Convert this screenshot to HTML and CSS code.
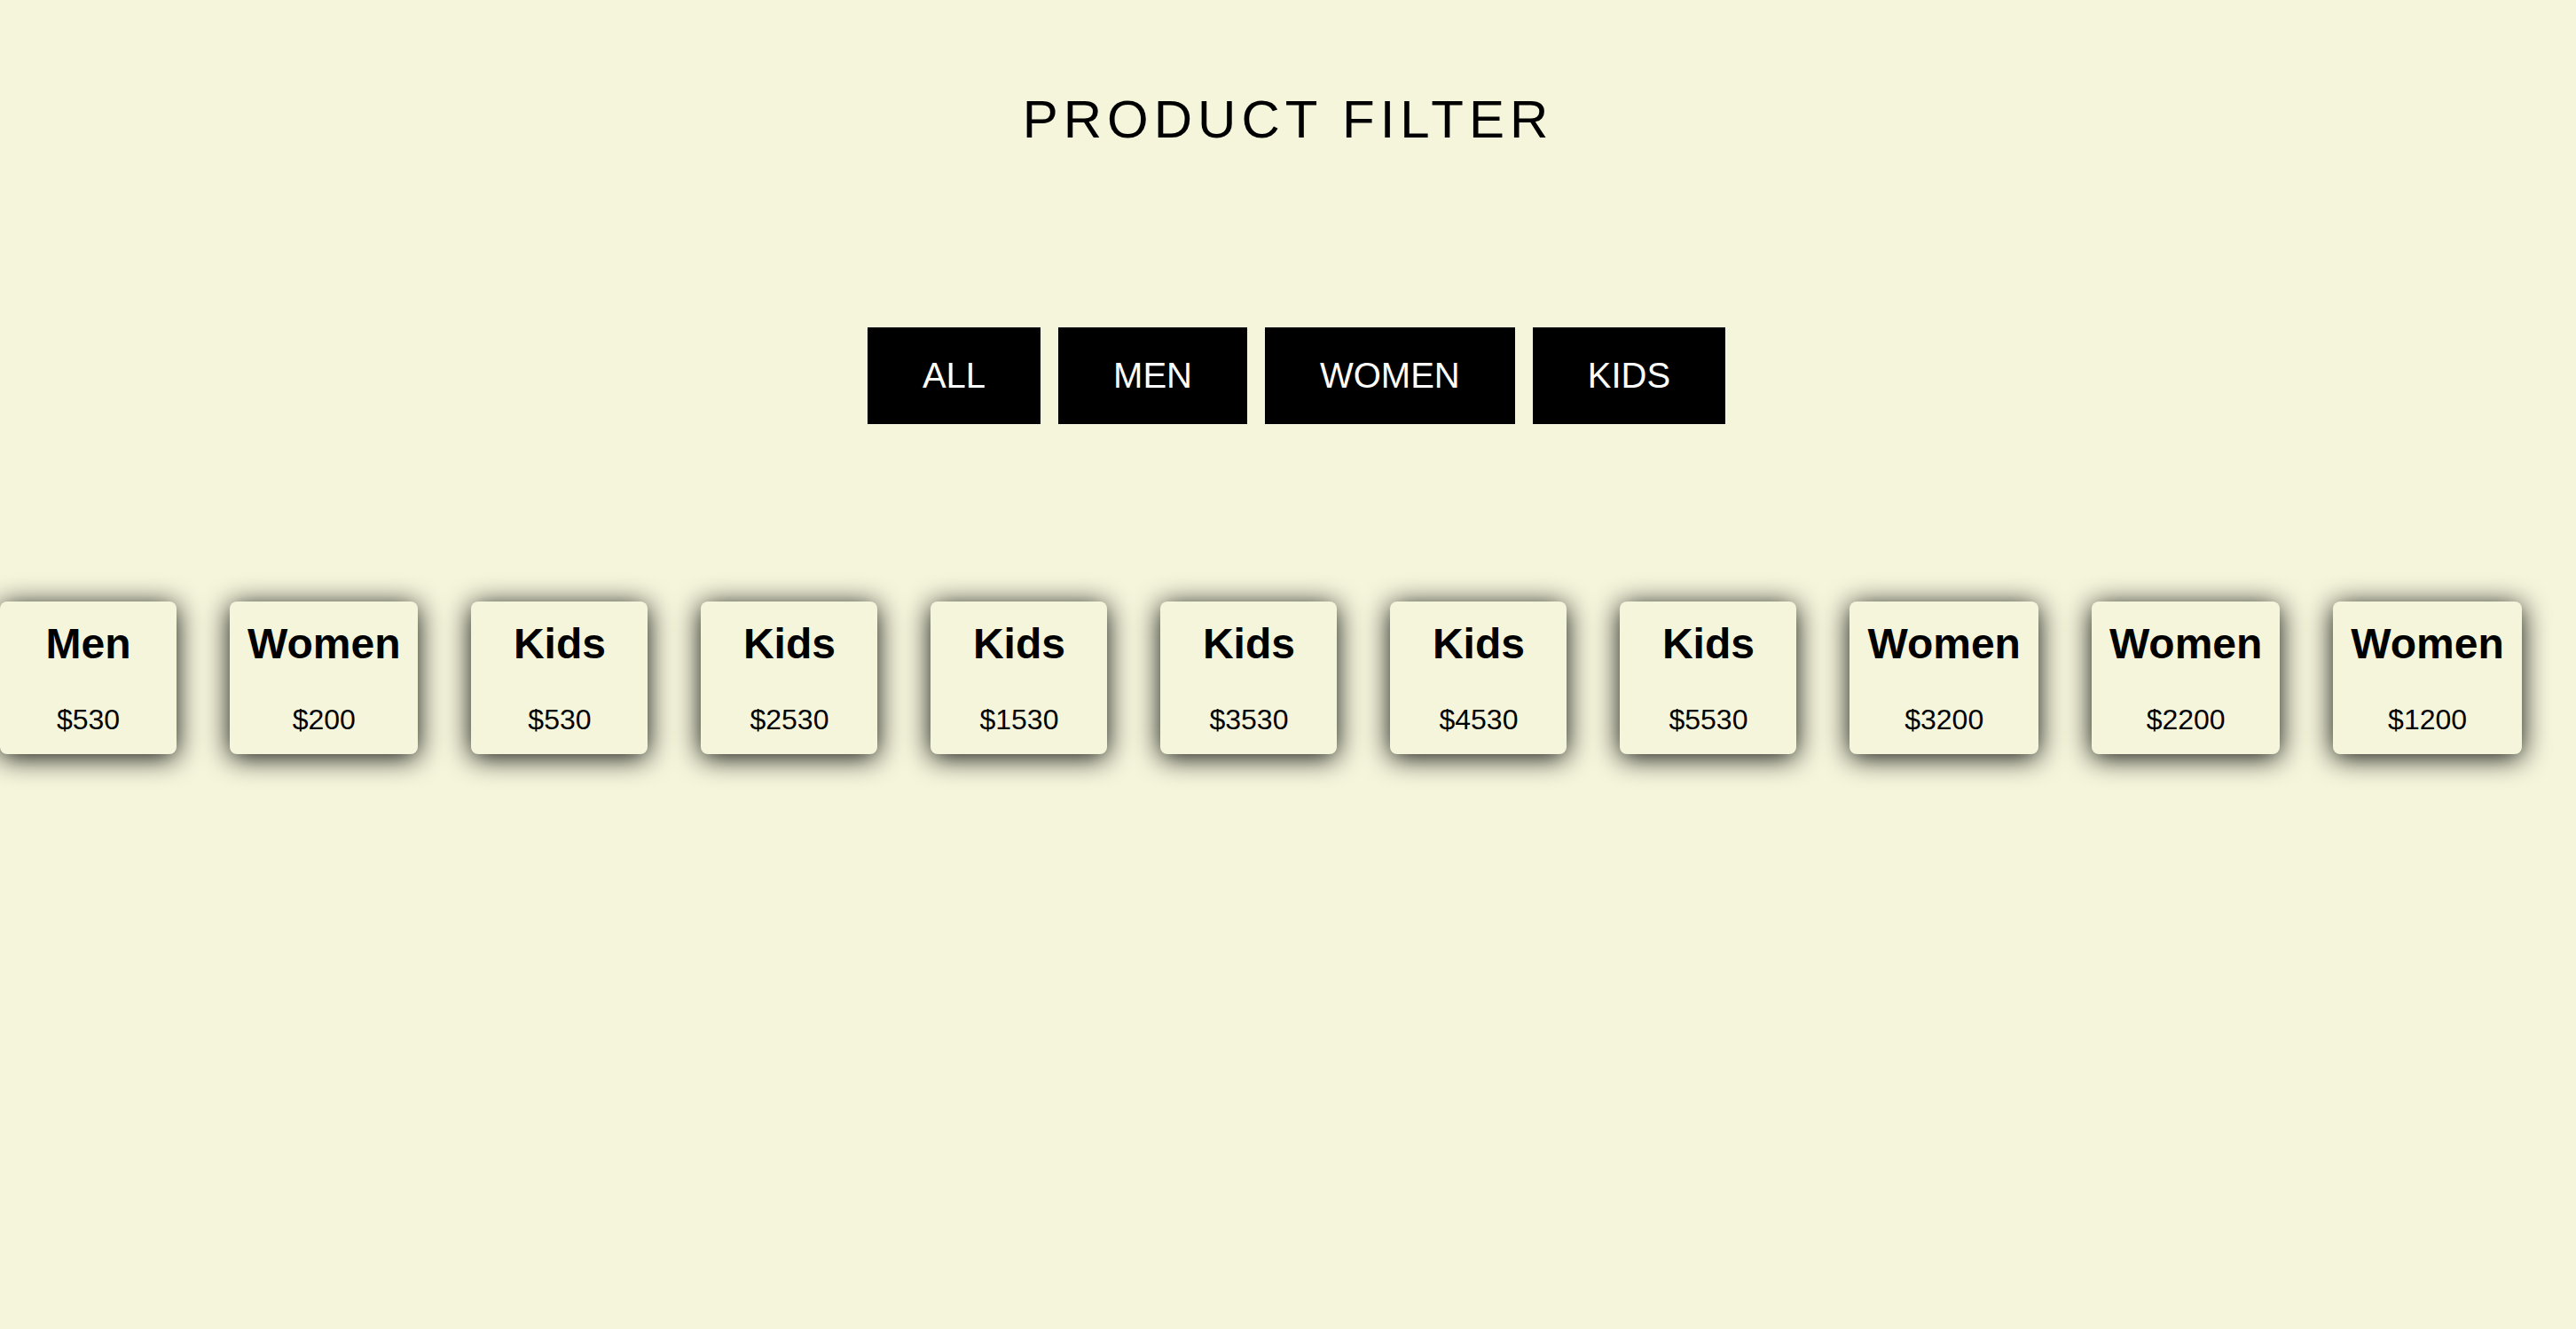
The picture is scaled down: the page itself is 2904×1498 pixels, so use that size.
FILE: index.html
```html
<!DOCTYPE html>
<html lang="en">
<head>
<meta charset="utf-8">
<title>Product Filter</title>
<link rel="stylesheet" href="styles.css">
</head>
<body>
<main class="page">
  <h1 class="title">PRODUCT FILTER</h1>
  <div class="filters">
    <button class="filter-btn">ALL</button>
    <button class="filter-btn">MEN</button>
    <button class="filter-btn">WOMEN</button>
    <button class="filter-btn">KIDS</button>
  </div>
  <div class="products">
    <div class="card"><h2 class="card-title">Men</h2><p class="card-price">$530</p></div>
    <div class="card"><h2 class="card-title">Women</h2><p class="card-price">$200</p></div>
    <div class="card"><h2 class="card-title">Kids</h2><p class="card-price">$530</p></div>
    <div class="card"><h2 class="card-title">Kids</h2><p class="card-price">$2530</p></div>
    <div class="card"><h2 class="card-title">Kids</h2><p class="card-price">$1530</p></div>
    <div class="card"><h2 class="card-title">Kids</h2><p class="card-price">$3530</p></div>
    <div class="card"><h2 class="card-title">Kids</h2><p class="card-price">$4530</p></div>
    <div class="card"><h2 class="card-title">Kids</h2><p class="card-price">$5530</p></div>
    <div class="card"><h2 class="card-title">Women</h2><p class="card-price">$3200</p></div>
    <div class="card"><h2 class="card-title">Women</h2><p class="card-price">$2200</p></div>
    <div class="card"><h2 class="card-title">Women</h2><p class="card-price">$1200</p></div>
  </div>
</main>
</body>
</html>
```

FILE: styles.css
```css
html, body {
  margin: 0;
  padding: 0;
  background: #f5f5dc;
  font-family: "Liberation Sans", Arial, Helvetica, sans-serif;
  color: #000;
}

body {
  min-height: 100vh;
}

.page {
  display: flex;
  flex-direction: column;
  align-items: stretch;
  padding-bottom: 200px;
}

.title {
  margin: 100px 0 0;
  font-size: 60px;
  font-weight: 400;
  letter-spacing: 6px;
  text-align: center;
  line-height: normal;
}

.filters {
  display: flex;
  justify-content: center;
  gap: 20px;
  margin-top: 200px;
  padding-left: 19px;
}

.filter-btn {
  background: #000;
  color: #fff;
  border: none;
  border-radius: 0;
  padding: 32px 62px;
  font-family: "Liberation Sans", Arial, Helvetica, sans-serif;
  font-size: 40px;
  line-height: normal;
  cursor: pointer;
}

.products {
  display: flex;
  justify-content: flex-start;
  gap: 60px;
  margin-top: 200px;
}

.card {
  box-sizing: border-box;
  min-width: 199px;
  padding: 20px 20px;
  background: #f5f5dc;
  border-radius: 8px;
  box-shadow: 0 4px 30px rgba(0, 0, 0, 0.95);
  text-align: center;
  flex: 0 0 auto;
}

.card-title {
  margin: 0 0 40px;
  font-size: 48px;
  font-weight: 700;
  line-height: normal;
}

.card-price {
  margin: 0;
  font-size: 32px;
  line-height: normal;
}
```
